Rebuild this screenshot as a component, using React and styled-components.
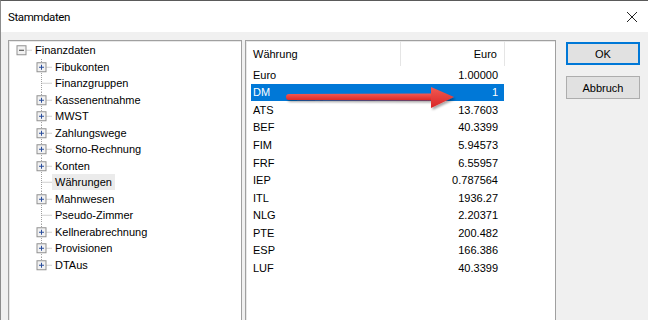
import React from 'react'
import styled, { createGlobalStyle } from 'styled-components'

const GlobalStyle = createGlobalStyle`
  html, body {
    margin: 0;
    padding: 0;
    background: #f0f0f0;
    overflow: hidden;
  }
  body {
    font-family: "Liberation Sans", Arial, sans-serif;
    font-size: 11px;
    color: #000;
  }
  * { box-sizing: border-box; }
`;

const treeItems = [
    { label: 'Finanzdaten', level: 0, box: 'minus' },
    { label: 'Fibukonten', level: 1, box: 'plus' },
    { label: 'Finanzgruppen', level: 1 },
    { label: 'Kassenentnahme', level: 1, box: 'plus' },
    { label: 'MWST', level: 1, box: 'plus' },
    { label: 'Zahlungswege', level: 1, box: 'plus' },
    { label: 'Storno-Rechnung', level: 1, box: 'plus' },
    { label: 'Konten', level: 1, box: 'plus' },
    { label: 'Währungen', level: 1, active: true },
    { label: 'Mahnwesen', level: 1, box: 'plus' },
    { label: 'Pseudo-Zimmer', level: 1 },
    { label: 'Kellnerabrechnung', level: 1, box: 'plus' },
    { label: 'Provisionen', level: 1, box: 'plus' },
    { label: 'DTAus', level: 1, box: 'plus', last: true },
];

const rates = [
    ['Euro', '1.00000'],
    ['DM', '1'],
    ['ATS', '13.7603'],
    ['BEF', '40.3399'],
    ['FIM', '5.94573'],
    ['FRF', '6.55957'],
    ['IEP', '0.787564'],
    ['ITL', '1936.27'],
    ['NLG', '2.20371'],
    ['PTE', '200.482'],
    ['ESP', '166.386'],
    ['LUF', '40.3399'],
];

const ROW_H = 16.5;

const Window = styled.div`
  width: 648px;
  height: 320px;
  display: flex;
  flex-direction: column;
  border-left: 1px solid #8c8c8c;
  border-top: 1px solid #5a5a5a;
  overflow: hidden;
`;

const TitleBar = styled.div`
  height: 31px;
  flex: none;
  background: #fff;
  display: flex;
  align-items: center;
  justify-content: space-between;
  padding: 0 11px 0 7px;
`;

const Title = styled.span`
  font-family: Roboto, "Liberation Sans", sans-serif;
  font-size: 11.5px;
  letter-spacing: -0.4px;
  color: #000;
`;

const Body = styled.div`
  display: flex;
  align-items: flex-start;
  padding: 8px 8px 0 7px;
`;

const Sunken = styled.div`
  background: #fff;
  height: 300px;
  border: 1px solid #a0a0a0;
  box-shadow: inset 1px 1px 0 #e8e8e8;
  flex: none;
`;

const TreePanel = styled(Sunken)`
  width: 234px;
  padding: 1px 0 0 3px;
`;

const ListPanel = styled(Sunken)`
  width: 311px;
  margin-left: 3px;
  position: relative;
`;

const TreeRow = styled.div`
  display: flex;
  align-items: center;
  height: ${ROW_H}px;
  padding-left: ${p => p.$level * 20}px;
`;

const TreeLabel = styled.span`
  height: 16px;
  line-height: 16px;
  padding: 0 3px;
  white-space: nowrap;
  background: ${p => (p.$active ? '#ebebeb' : 'transparent')};
`;

const Header = styled.div`
  display: flex;
  height: 25px;
  align-items: center;
`;

const HeadCell = styled.div`
  height: 100%;
  display: flex;
  align-items: center;
  justify-content: ${p => (p.$right ? 'flex-end' : 'flex-start')};
  width: ${p => p.$w}px;
  padding: ${p => (p.$right ? '0 7px 0 0' : '0 0 0 7px')};
  border-right: 1px solid #e5e5e5;
`;

const Rows = styled.div`
  padding-left: 5px;
`;

const Row = styled.div`
  display: flex;
  width: 253px;
  height: 17.55px;
  align-items: center;
  background: ${p => (p.$selected ? '#0078d7' : 'transparent')};
  color: ${p => (p.$selected ? '#fff' : '#000')};
`;

const Cell = styled.span`
  width: ${p => p.$w}px;
  text-align: ${p => (p.$right ? 'right' : 'left')};
  padding: ${p => (p.$right ? '0 6px 0 0' : '0 0 0 2px')};
`;

const Buttons = styled.div`
  display: flex;
  flex-direction: column;
  gap: 11px;
  margin-left: 10px;
  padding-top: 2px;
`;

const Button = styled.button`
  width: 74px;
  height: 23px;
  font-family: "Liberation Sans", Arial, sans-serif;
  font-size: 11px;
  color: #000;
  background: #e1e1e1;
  border: 1px solid ${p => (p.$default ? '#0078d7' : '#adadad')};
  box-shadow: ${p => (p.$default ? 'inset 0 0 0 1px #0078d7' : 'none')};
  padding: 0;
`;

const Arrow = styled.svg`
  position: absolute;
  left: 35px;
  top: 42px;
  overflow: visible;
`;

const Expander = ({ kind, level, last }) => {
    const c = ROW_H / 2;
    const x = 9.5;
    return (
        <svg width="20" height={ROW_H} style={{ flex: 'none' }}>
            {level > 0 && (
                <line x1={x} y1="0" x2={x} y2={last ? c : ROW_H} stroke="#a0a0a0" strokeDasharray="1 1" />
            )}
            <line x1={kind ? x + 4 : x} y1={c} x2="20" y2={c} stroke="#a0a0a0" strokeDasharray="1 1" />
            {kind && (
                <g>
                    <rect x={x - 4.5} y={c - 4.5} width="9" height="9" fill="#f2f2f2" stroke="#919191" />
                    <line x1={x - 2.5} y1={c} x2={x + 2.5} y2={c} stroke={kind === 'plus' ? '#2a4d9b' : '#3c3c3c'} />
                    {kind === 'plus' && (
                        <line x1={x} y1={c - 2.5} x2={x} y2={c + 2.5} stroke="#2a4d9b" />
                    )}
                </g>
            )}
        </svg>
    );
};

const App = () => {
    return (
        <>
            <GlobalStyle />
            <Window>
                <TitleBar>
                    <Title>Stammdaten</Title>
                    <svg width="10" height="10">
                        <line x1="0" y1="0" x2="10" y2="10" stroke="#222" strokeWidth="1" />
                        <line x1="10" y1="0" x2="0" y2="10" stroke="#222" strokeWidth="1" />
                    </svg>
                </TitleBar>
                <Body>
                    <TreePanel>
                        {treeItems.map(item => (
                            <TreeRow key={item.label} $level={item.level}>
                                <Expander kind={item.box} level={item.level} last={item.last} />
                                <TreeLabel $active={item.active}>{item.label}</TreeLabel>
                            </TreeRow>
                        ))}
                    </TreePanel>
                    <ListPanel>
                        <Header>
                            <HeadCell $w={155}>Währung</HeadCell>
                            <HeadCell $w={104} $right>Euro</HeadCell>
                        </Header>
                        <Rows>
                            {rates.map(([name, value]) => (
                                <Row key={name} $selected={name === 'DM'}>
                                    <Cell $w={149}>{name}</Cell>
                                    <Cell $w={104} $right>{value}</Cell>
                                </Row>
                            ))}
                        </Rows>
                        {/* red annotation arrow on top of the list */}
                        <Arrow width="180" height="30">
                            <defs>
                                <linearGradient id="red" x1="0" y1="0" x2="0" y2="1">
                                    <stop offset="0" stopColor="#f25a52" />
                                    <stop offset="1" stopColor="#d82626" />
                                </linearGradient>
                                <filter id="shadow" x="-10%" y="-50%" width="130%" height="200%">
                                    <feDropShadow dx="1.5" dy="2" stdDeviation="1.2" floodColor="#000" floodOpacity="0.35" />
                                </filter>
                            </defs>
                            <g filter="url(#shadow)" fill="url(#red)">
                                <path d="M8 11 L152 10.5 L152 17.5 L8 17 A3 3 0 0 1 8 11 Z" />
                                <path d="M150 4 L173 14 L150 25 Z" />
                            </g>
                        </Arrow>
                    </ListPanel>
                    <Buttons>
                        <Button $default>OK</Button>
                        <Button>Abbruch</Button>
                    </Buttons>
                </Body>
            </Window>
        </>
    )
}

export default App;
